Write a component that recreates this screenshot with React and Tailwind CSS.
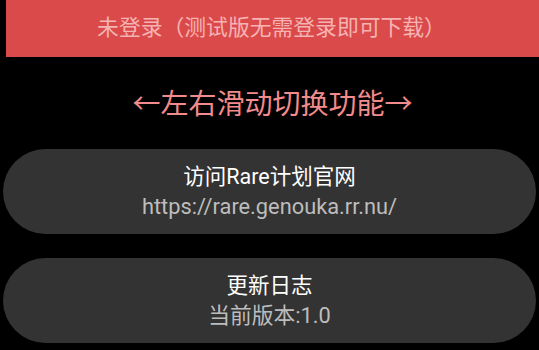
import React from "react";

const InfoCard = ({ title, subtitle }) => {
  return (
    <div className="mx-[3px] h-[85px] rounded-full bg-[#333333] flex flex-col items-center justify-center">
      <div className="text-[21.5px] leading-[30px] text-white">{title}</div>
      <div className="text-[21.8px] leading-[30px] text-[#bdbdbd]">{subtitle}</div>
    </div>
  );
};

const App = () => {
  return (
    <div
      className="w-[539px] h-[350px] overflow-hidden bg-black"
      style={{ fontFamily: 'Roboto, "Noto Sans CJK SC", sans-serif' }}
    >
      <div className="ml-[6px] h-[57px] pr-[2px] bg-[#db4a4a] flex items-center justify-center text-[21.8px] text-[#f5b3b3]">
        未登录（测试版无需登录即可下载）
      </div>

      <div className="mt-[30px] pl-[6px] text-center text-[28px] leading-[36px] text-[#f28b8b]">
        ←左右滑动切换功能→
      </div>

      <div className="mt-[26px] flex flex-col gap-[24px]">
        <InfoCard title="访问Rare计划官网" subtitle="https://rare.genouka.rr.nu/" />
        <InfoCard title="更新日志" subtitle="当前版本:1.0" />
      </div>
    </div>
  );
};

export default App;
